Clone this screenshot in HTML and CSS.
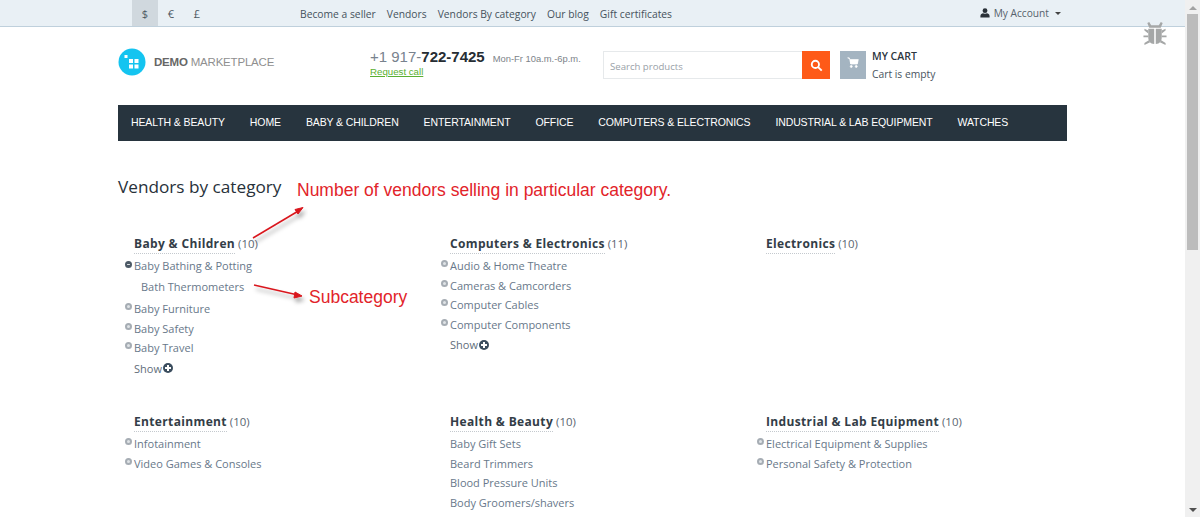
FILE: index.html
```html
<!DOCTYPE html>
<html lang="en">
<head>
  <meta charset="UTF-8">
  <title>Vendors by category - Demo Marketplace</title>
  <link rel="stylesheet" href="styles.css">
</head>
<body>
  <div class="topbar">
    <div class="wrap topbar-inner">
      <div class="currencies">
        <a class="cur active">$</a>
        <a class="cur">€</a>
        <a class="cur">£</a>
      </div>
      <nav class="toplinks">
        <a>Become a seller</a>
        <a>Vendors</a>
        <a>Vendors By category</a>
        <a>Our blog</a>
        <a>Gift certificates</a>
      </nav>
      <div class="account">
        <svg class="user-icon" viewBox="0 0 12 12"><circle cx="6" cy="3.2" r="2.9"/><path d="M0.5 11.5V9.6C0.5 7.6 2.5 6.6 3.6 6.4 4.4 7.1 7.6 7.1 8.4 6.4 9.5 6.6 11.5 7.6 11.5 9.6V11.5Z"/></svg>
        <span>My Account</span>
        <i class="caret"></i>
      </div>
    </div>
  </div>

  <div class="wrap">
    <header class="head">
      <div class="logo">
        <svg class="logo-icon" viewBox="0 0 28 28">
          <circle cx="14" cy="14" r="13.5" fill="#14c4f0"/>
          <rect x="6.5" y="7" width="3" height="3" fill="#fff"/>
          <rect x="11" y="11" width="4" height="4" fill="#fff"/>
          <rect x="16.5" y="11" width="4" height="4" fill="#fff"/>
          <rect x="11" y="16.5" width="4" height="4" fill="#fff"/>
          <rect x="16.5" y="16.5" width="4" height="4" fill="#fff"/>
        </svg>
        <span class="logo-text"><b>DEMO</b> MARKETPLACE</span>
      </div>
      <div class="phone">
        <div class="phone-line">
          <span class="phone-num">+1 917-<b>722-7425</b></span>
          <span class="phone-hours">Mon-Fr 10a.m.-6p.m.</span>
        </div>
        <a class="request">Request call</a>
      </div>
      <form class="search">
        <input type="text" placeholder="Search products">
        <button type="button">
          <svg viewBox="0 0 14 14"><circle cx="5.8" cy="5.8" r="3.9"/><path d="M8.8 8.8L12.6 12.6"/></svg>
        </button>
      </form>
      <div class="cart">
        <div class="cart-icon">
          <svg viewBox="0 0 14 14"><path d="M0.5 1H2.6L3.6 3H13.2L12 8.2H4.4L3.2 3"/><rect x="4" y="4.2" width="8" height="3.4"/><circle cx="5" cy="11" r="1.2"/><circle cx="10.8" cy="11" r="1.2"/></svg>
        </div>
        <div>
          <div class="cart-title">MY CART</div>
          <div class="cart-sub">Cart is empty</div>
        </div>
      </div>
    </header>

    <nav class="mainmenu">
      <a>HEALTH &amp; BEAUTY</a>
      <a>HOME</a>
      <a>BABY &amp; CHILDREN</a>
      <a>ENTERTAINMENT</a>
      <a>OFFICE</a>
      <a>COMPUTERS &amp; ELECTRONICS</a>
      <a>INDUSTRIAL &amp; LAB EQUIPMENT</a>
      <a>WATCHES</a>
    </nav>

    <h1 class="page-title">Vendors by category</h1>

    <div class="categories">
      <section class="cat">
        <h3><a>Baby &amp; Children</a> <span>(10)</span></h3>
        <ul>
          <li class="open">Baby Bathing &amp; Potting
            <div class="sub">Bath Thermometers</div>
          </li>
          <li>Baby Furniture</li>
          <li>Baby Safety</li>
          <li>Baby Travel</li>
        </ul>
        <div class="show">Show<i class="plus"></i></div>
      </section>
      <section class="cat">
        <h3><a>Computers &amp; Electronics</a> <span>(11)</span></h3>
        <ul>
          <li>Audio &amp; Home Theatre</li>
          <li>Cameras &amp; Camcorders</li>
          <li>Computer Cables</li>
          <li>Computer Components</li>
        </ul>
        <div class="show">Show<i class="plus"></i></div>
      </section>
      <section class="cat">
        <h3><a>Electronics</a> <span>(10)</span></h3>
      </section>
      <section class="cat">
        <h3><a>Entertainment</a> <span>(10)</span></h3>
        <ul>
          <li>Infotainment</li>
          <li>Video Games &amp; Consoles</li>
        </ul>
      </section>
      <section class="cat">
        <h3><a>Health &amp; Beauty</a> <span>(10)</span></h3>
        <ul class="plain">
          <li>Baby Gift Sets</li>
          <li>Beard Trimmers</li>
          <li>Blood Pressure Units</li>
          <li>Body Groomers/shavers</li>
        </ul>
      </section>
      <section class="cat">
        <h3><a>Industrial &amp; Lab Equipment</a> <span>(10)</span></h3>
        <ul>
          <li>Electrical Equipment &amp; Supplies</li>
          <li>Personal Safety &amp; Protection</li>
        </ul>
      </section>
    </div>
  </div>

  <!-- screenshot annotations, drawn over the page -->
  <div class="note note-vendors">Number of vendors selling in particular category.</div>
  <div class="note note-sub">Subcategory</div>
  <svg class="arrows" viewBox="0 0 1200 517">
    <defs>
      <filter id="shadow"><feDropShadow dx="2" dy="4" stdDeviation="2" flood-color="#000" flood-opacity="0.35"/></filter>
    </defs>
    <g filter="url(#shadow)" fill="#d9151c" stroke="#d9151c">
      <path d="M253 238L300 210" stroke-width="1.5"/>
      <path d="M303 207.500L295 209.500L298 214Z"/>
      <path d="M254 285L298 295" stroke-width="1.5"/>
      <path d="M302 296L295 292L294 298Z"/>
    </g>
  </svg>

  <svg class="bug" viewBox="0 0 24 26">
    <path d="M6 1L8 4.500H16L18 1L20 2L18 7H6L4 2Z"/>
    <path d="M5 8H11.200V24C7 24 5 21 5 17ZM12.800 8H19V17C19 21 17 24 12.800 24Z"/>
    <path d="M5 10L1 8V10L5 13ZM19 10L23 8V10L19 13ZM5 15H0V17H5ZM19 15H24V17H19ZM5.500 20L1 23V25L7 22ZM18.500 20L23 23V25L17 22Z"/>
  </svg>

  <div class="scrollbar">
    <i class="arrow-up"></i>
    <div class="thumb"></div>
    <i class="arrow-down"></i>
  </div>
</body>
</html>
```

FILE: styles.css
```css
html, body {
  height: 517px;
  overflow: hidden;
}
body {
  margin: 0;
  font-family: "Open Sans", sans-serif;
  font-size: 12px;
  color: #4a5560;
  background: #fff;
}
a {
  color: inherit;
  text-decoration: none;
}
.wrap {
  width: 949px;
  margin-left: 118px;
}

/* top bar */
.topbar {
  height: 26px;
  background: #e9f0f5;
  border-bottom: 1px solid #bfd0dc;
}
.topbar-inner {
  display: flex;
  height: 26px;
  align-items: center;
}
.currencies {
  display: flex;
  margin-left: 14px;
  height: 100%;
}
.cur {
  width: 26px;
  line-height: 27px;
  text-align: center;
  font-size: 11px;
  color: #4d5963;
}
.active {
  background: #d0d8de;
}
.toplinks {
  display: flex;
  gap: 11px;
  margin-left: 90px;
  padding-top: 2px;
  font-size: 10.300px;
  color: #46525c;
}
.account {
  display: flex;
  align-items: center;
  margin-left: auto;
  margin-right: 6px;
  font-size: 10.200px;
  color: #56626c;
}
.user-icon {
  width: 10px;
  height: 10px;
  margin-right: 4px;
  fill: #2a3138;
}
.caret {
  width: 0;
  height: 0;
  margin-left: 6px;
  border: 3px solid transparent;
  border-top-color: #444;
  border-bottom: 0;
}

/* header */
.head {
  display: flex;
  height: 78px;
  padding-top: 21px;
  box-sizing: border-box;
  align-items: flex-start;
}
.logo {
  display: flex;
  align-items: center;
  width: 252px;
}
.logo-icon {
  width: 28px;
  height: 28px;
  margin-right: 8px;
}
.logo-text {
  font-family: "Liberation Sans", Arial, sans-serif;
  font-size: 11.500px;
  color: #8f8f8f;
  letter-spacing: -0.2px;
}
.logo-text b {
  color: #666;
}
.phone {
  width: 233px;
  font-family: "Liberation Sans", Arial, sans-serif;
}
.phone-line {
  display: flex;
  align-items: baseline;
  height: 17px;
}
.phone-num {
  font-size: 15px;
  color: #78828e;
}
.phone-num b {
  color: #262d33;
}
.phone-hours {
  margin-left: 8px;
  font-size: 9.400px;
  color: #7d8389;
}
.request {
  font-size: 9.700px;
  color: #5ab031;
  text-decoration: underline;
  line-height: 12px;
  display: block;
  margin-top: 1px;
}
.search {
  display: flex;
  width: 227px;
  height: 28px;
  margin-top: 3px;
}
.search input {
  flex: 1;
  min-width: 0;
  padding: 2px 6px 0;
  border: 1px solid #e6e9eb;
  border-right: 0;
  font-family: "Open Sans", sans-serif;
  font-size: 9.600px;
  outline: none;
}
.search input::placeholder {
  color: #9aa1a8;
}
.search button {
  width: 28px;
  padding: 0;
  border: 0;
  background: #fe5a18;
  display: flex;
  align-items: center;
  justify-content: center;
}
.search svg {
  width: 13px;
  height: 13px;
  fill: none;
  stroke: #fff;
  stroke-width: 2;
}
.cart {
  display: flex;
  margin-left: 10px;
  margin-top: 3px;
}
.cart-icon {
  width: 26px;
  height: 28px;
  background: #a4b4c1;
  margin-right: 6px;
  display: flex;
  justify-content: center;
  padding-top: 6px;
  box-sizing: border-box;
}
.cart-icon svg {
  width: 12px;
  height: 12px;
  fill: #fff;
  stroke: #fff;
  stroke-width: 0.8;
}
.cart-title {
  font-size: 10.500px;
  font-weight: 600;
  color: #2d3640;
  line-height: 14px;
  margin-top: -2px;
}
.cart-sub {
  font-size: 10.300px;
  color: #4a5560;
  line-height: 14px;
  margin-top: 4px;
}

/* main menu */
.mainmenu {
  display: flex;
  gap: 25px;
  height: 36px;
  padding: 0 0 2px 13px;
  box-sizing: border-box;
  background: #27343e;
  align-items: center;
  font-family: "Liberation Sans", Arial, sans-serif;
  font-size: 10.500px;
  color: #fff;
  letter-spacing: -0.11px;
}

/* content */
.page-title {
  margin: 33px 0 0;
  font-size: 17.200px;
  font-weight: 400;
  line-height: 26px;
  color: #27313a;
}
.categories {
  display: grid;
  grid-template-columns: repeat(3, 316px);
  grid-template-rows: 178px auto;
  margin-top: 35px;
}
.cat {
  padding-left: 16px;
}
.cat h3 {
  margin: 0;
  font-size: 11.400px;
  font-weight: 400;
  line-height: 18px;
  color: #5a6570;
}
.cat h3 a {
  font-size: 12px;
  font-weight: 700;
  color: #333d47;
  letter-spacing: 0.35px;
  border-bottom: 1px dotted #c4c9ce;
  padding-bottom: 1px;
}
.cat ul {
  list-style: none;
  margin: 3px 0 0;
  padding: 0;
}
.cat li {
  position: relative;
  font-size: 11px;
  line-height: 19.500px;
  color: #68788a;
}
.cat li::before {
  content: "";
  position: absolute;
  left: -9px;
  top: 4px;
  width: 3px;
  height: 3px;
  border-radius: 50%;
  border: 2px solid #a6adb4;
  background: #dfe3e6;
}
.cat li.open::before {
  top: 5px;
  border-color: #4d5a66;
  background: linear-gradient(#4d5a66 1px, #dfe3e6 1px, #dfe3e6 2px, #4d5a66 2px);
}
.cat .plain li::before {
  display: none;
}
.sub {
  padding-left: 7px;
  margin-top: 1px;
  margin-bottom: 3px;
}
.show {
  display: flex;
  align-items: center;
  margin-top: 1px;
  font-size: 11px;
  line-height: 19px;
  color: #5f6d7a;
}
.plus {
  position: relative;
  width: 10px;
  height: 10px;
  margin-left: 1px;
  border-radius: 50%;
  background: #3b4d5e;
}
.plus::before, .plus::after {
  content: "";
  position: absolute;
  background: #fff;
}
.plus::before {
  left: 2px;
  top: 4px;
  width: 6px;
  height: 2px;
}
.plus::after {
  left: 4px;
  top: 2px;
  width: 2px;
  height: 6px;
}

/* overlays */
.note {
  position: absolute;
  font-family: "Liberation Sans", Arial, sans-serif;
  font-size: 17.500px;
  line-height: 20px;
  color: #e2242a;
}
.note-vendors {
  left: 297px;
  top: 180px;
}
.note-sub {
  left: 309px;
  top: 287px;
}
.arrows {
  position: absolute;
  left: 0;
  top: 0;
  width: 1200px;
  height: 517px;
  pointer-events: none;
}
.bug {
  position: absolute;
  left: 1143px;
  top: 21px;
  width: 24px;
  height: 25px;
  fill: #a5a7a7;
}
.scrollbar {
  position: absolute;
  right: 0;
  top: 0;
  display: flex;
  flex-direction: column;
  align-items: center;
  width: 15px;
  height: 517px;
  background: #f0f0f0;
}
.thumb {
  width: 11px;
  height: 236px;
  margin-top: 4px;
  background: #bcbcbc;
}
.arrow-up, .arrow-down {
  width: 0;
  height: 0;
  border: 4px solid transparent;
}
.arrow-up {
  margin-top: 6px;
  border-top: 0;
  border-bottom-color: #a3a3a3;
}
.arrow-down {
  margin-top: auto;
  margin-bottom: 5px;
  border-bottom: 0;
  border-top-color: #505050;
}
```
